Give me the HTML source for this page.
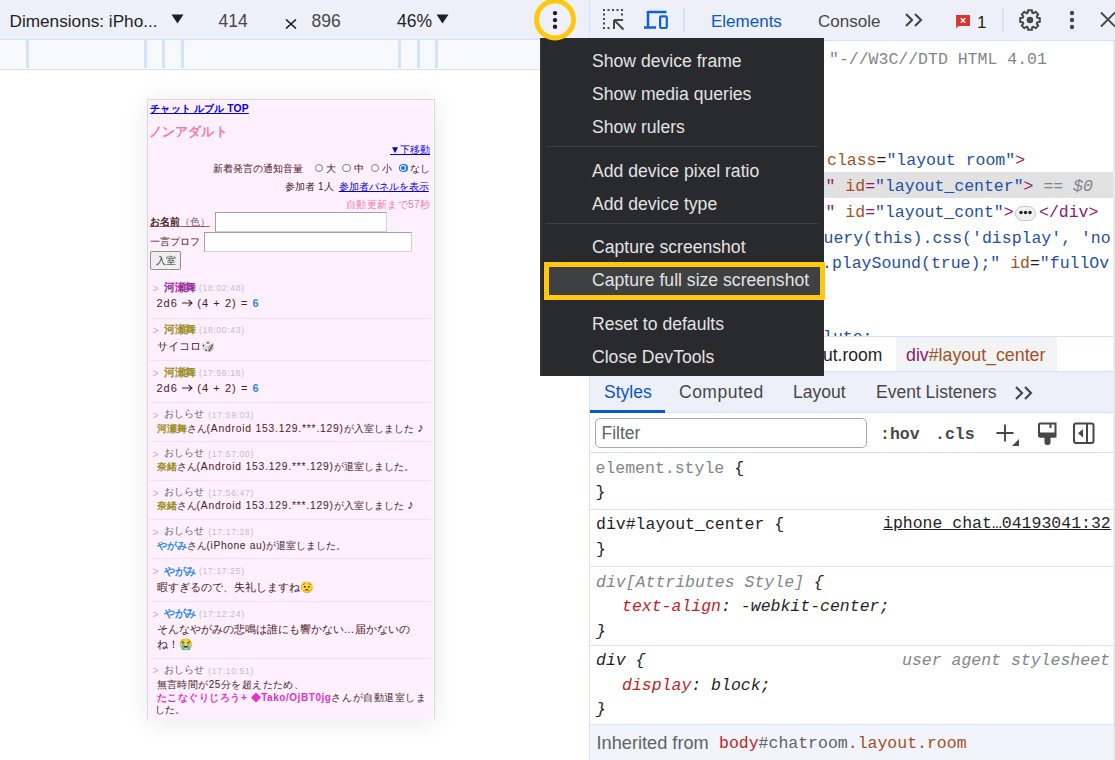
<!DOCTYPE html>
<html><head><meta charset="utf-8">
<style>
*{margin:0;padding:0;box-sizing:border-box}
html,body{width:1115px;height:760px;overflow:hidden;background:#fff;font-family:"Liberation Sans",sans-serif;position:relative}
.a{position:absolute}
.t{position:absolute;white-space:pre;line-height:1}
.mono{font-family:"Liberation Mono",monospace}
/* left */
#ltb{left:0;top:0;width:589px;height:39px;background:#edf0f8}
#lbd{left:0;top:39px;width:589px;height:1px;background:#d3e3fd}
#rul{left:0;top:40px;width:589px;height:29px;background:#f8f9fd}
#rbd{left:0;top:69px;width:589px;height:1px;background:#d3e3fd}
.rl{top:40px;width:3px;height:28px;background:#d3e3fd}
#vbd{left:589px;top:0;width:1px;height:760px;background:#d3e3fd}
/* devtools */
#dtb{left:590px;top:0;width:525px;height:40px;background:#edf0f8}
#dtbb{left:590px;top:40px;width:525px;height:1px;background:#d3e3fd}
.tb{font-size:17.5px;color:#474747}
.m{position:absolute;white-space:pre;line-height:1;font-family:"Liberation Mono",monospace;font-size:16.5px;color:#1f1f1f}
.tg{color:#8f1a6e}.an{color:#a5501f}.av{color:#1f4fa6}.dk{color:#1f1f1f}
.it{font-style:italic}
.p{position:absolute;white-space:pre;line-height:1}
.sans{font-family:"Liberation Sans",sans-serif}
.mi{position:absolute;left:592px;white-space:pre;line-height:1;font-size:17.6px;color:#e3e3e3}
.ms{position:absolute;left:546px;width:273px;height:1px;background:#3f4043}
.hl{position:absolute;height:1px;background:#d3e3fd}

</style></head><body>
<div class="a" id="ltb"></div>
<div class="a" id="lbd"></div>
<div class="a" id="rul"></div>
<div class="a" id="rbd"></div>
<div class="a rl" style="left:26px"></div>
<div class="a rl" style="left:144px"></div>
<div class="a rl" style="left:162px"></div>
<div class="a rl" style="left:181px"></div>
<div class="a rl" style="left:398px"></div>
<div class="a rl" style="left:417px"></div>
<div class="a rl" style="left:435px"></div>
<div class="a" id="vbd"></div>
<!-- phone start -->
<div class="a" style="left:147px;top:99px;width:288px;height:620px;background:#fff0ff;border:1px solid #d9d9d9;border-bottom:none;box-shadow:0 3px 24px rgba(0,0,0,.09)"></div>
<div class="a" style="left:433px;top:100px;width:1.2px;height:619px;background:#fff"></div>
<div class="p" style="left:150.3px;top:103.8px;font-size:10.3px;color:#0000ee;font-weight:bold;text-decoration:underline;letter-spacing:0.15px">チャット ルブル TOP</div>
<div class="p" style="left:148.6px;top:125.0px;font-size:13px;color:#f47aae;font-weight:bold;letter-spacing:0.2px">ノンアダルト</div>
<div class="p" style="right:685.0px;top:144.6px;font-size:10px;color:#0000ee;text-decoration:underline">▼下移動</div>
<div class="p" style="left:213.1px;top:163.8px;font-size:10px;color:#4b2020;">新着発言の通知音量</div>
<div class="a" style="left:314.5px;top:163.7px;width:8.6px;height:8.6px;border-radius:50%;background:#fff;border:1px solid #7a7a7a"></div>
<div class="p" style="left:325.7px;top:163.8px;font-size:10px;color:#4b2020;">大</div>
<div class="a" style="left:342.4px;top:163.7px;width:8.6px;height:8.6px;border-radius:50%;background:#fff;border:1px solid #7a7a7a"></div>
<div class="p" style="left:354.0px;top:163.8px;font-size:10px;color:#4b2020;">中</div>
<div class="a" style="left:370.8px;top:163.7px;width:8.6px;height:8.6px;border-radius:50%;background:#fff;border:1px solid #7a7a7a"></div>
<div class="p" style="left:381.7px;top:163.8px;font-size:10px;color:#4b2020;">小</div>
<div class="a" style="left:399.0px;top:163.7px;width:8.6px;height:8.6px;border-radius:50%;background:#1a73e8"></div>
<div class="a" style="left:400.2px;top:164.9px;width:6.2px;height:6.2px;border-radius:50%;background:#fff"></div>
<div class="a" style="left:401.1px;top:165.8px;width:4.4px;height:4.4px;border-radius:50%;background:#1a73e8"></div>
<div class="p" style="left:410.0px;top:163.8px;font-size:10px;color:#4b2020;">なし</div>
<div class="p" style="left:285.2px;top:181.5px;font-size:10px;color:#4b2020;">参加者 1人</div>
<div class="p" style="left:338.8px;top:181.5px;font-size:10px;color:#0000ee;text-decoration:underline">参加者パネルを表示</div>
<div class="p" style="right:684.7px;top:199.5px;font-size:10.3px;color:#f47aae;letter-spacing:0.3px">自動更新まで57秒</div>
<div class="p" style="left:149.8px;top:216.8px;font-size:10px;color:#4b2020;text-decoration:underline;text-decoration-color:#a05a5a"><b>お名前</b><span style="color:#7a5a6a">（色）</span></div>
<div class="a" style="left:215px;top:212px;width:172px;height:19.5px;background:#fff;border:1px solid #a0a0a0;border-right-color:#d0d0d0;border-bottom-color:#d0d0d0"></div>
<div class="p" style="left:149.8px;top:236.5px;font-size:10px;color:#4b2020;">一言プロフ</div>
<div class="a" style="left:204px;top:232px;width:208px;height:19.5px;background:#fff;border:1px solid #a0a0a0;border-right-color:#d0d0d0;border-bottom-color:#d0d0d0"></div>
<div class="a" style="left:150px;top:251.3px;width:31px;height:18.5px;background:#efefef;border:1px solid #8f8f8f;border-radius:2px"></div>
<div class="p" style="left:155.5px;top:255.8px;font-size:10px;color:#333;">入室</div>
<div class="p" style="left:152.6px;top:283.1px;font-size:10.5px;color:#c8b0c0;">&gt;</div>
<div class="p" style="left:164.0px;top:282.4px;font-size:11px;color:#9a2a9a;font-weight:bold;letter-spacing:-0.5px">河瀬舞</div>
<div class="p" style="left:199.0px;top:284.3px;font-size:8.6px;color:#cdb8c6;letter-spacing:0.65px">(18:02:48)</div>
<div class="p" style="left:156.5px;top:298.1px;font-size:11px;color:#4b2020;"><span style="letter-spacing:1.0px">2d6</span><svg width="11" height="8" style="margin:0 4.5px 0 4px;vertical-align:0px" viewBox="0 0 11 8"><path d="M0 4H10M6.5 0.8L10 4L6.5 7.2" stroke="#4b2020" stroke-width="1.1" fill="none"/></svg><span style="letter-spacing:1.05px">(4 + 2) = </span><span style="color:#2b8ae8;font-weight:bold">6</span></div>
<div class="a" style="left:150px;top:317.5px;width:281px;height:1px;background:#f2dff2"></div>
<div class="p" style="left:152.6px;top:325.1px;font-size:10.5px;color:#c8b0c0;">&gt;</div>
<div class="p" style="left:164.0px;top:324.4px;font-size:11px;color:#9e8c24;font-weight:bold;letter-spacing:-0.5px">河瀬舞</div>
<div class="p" style="left:199.0px;top:326.3px;font-size:8.6px;color:#cdb8c6;letter-spacing:0.65px">(18:00:43)</div>
<div class="p" style="left:156.5px;top:341.0px;font-size:11px;color:#4b2020;">サイコロ🎲</div>
<div class="a" style="left:150px;top:360.0px;width:281px;height:1px;background:#f2dff2"></div>
<div class="p" style="left:152.6px;top:367.8px;font-size:10.5px;color:#c8b0c0;">&gt;</div>
<div class="p" style="left:164.0px;top:367.1px;font-size:11px;color:#9e8c24;font-weight:bold;letter-spacing:-0.5px">河瀬舞</div>
<div class="p" style="left:199.0px;top:369.0px;font-size:8.6px;color:#cdb8c6;letter-spacing:0.65px">(17:59:18)</div>
<div class="p" style="left:156.5px;top:382.7px;font-size:11px;color:#4b2020;"><span style="letter-spacing:1.0px">2d6</span><svg width="11" height="8" style="margin:0 4.5px 0 4px;vertical-align:0px" viewBox="0 0 11 8"><path d="M0 4H10M6.5 0.8L10 4L6.5 7.2" stroke="#4b2020" stroke-width="1.1" fill="none"/></svg><span style="letter-spacing:1.05px">(4 + 2) = </span><span style="color:#2b8ae8;font-weight:bold">6</span></div>
<div class="a" style="left:150px;top:402.2px;width:281px;height:1px;background:#f2dff2"></div>
<div class="p" style="left:152.6px;top:409.5px;font-size:10.5px;color:#c8b0c0;">&gt;</div>
<div class="p" style="left:163.6px;top:409.2px;font-size:10px;color:#6a5a5a;">おしらせ</div>
<div class="p" style="left:208.3px;top:410.7px;font-size:8.6px;color:#cdb8c6;letter-spacing:0.65px">(17:59:03)</div>
<div class="p" style="left:156.5px;top:423.9px;font-size:10.3px;color:#4b2020;"><b style="color:#9e8c24">河瀬舞</b>さん<span style="letter-spacing:0.8px">(Android 153.129.***.129)</span>が入室しました<span style="font-size:13px;line-height:0;padding-left:3.5px">♪</span></div>
<div class="a" style="left:150px;top:441.3px;width:281px;height:1px;background:#f2dff2"></div>
<div class="p" style="left:152.6px;top:448.5px;font-size:10.5px;color:#c8b0c0;">&gt;</div>
<div class="p" style="left:163.6px;top:448.2px;font-size:10px;color:#6a5a5a;">おしらせ</div>
<div class="p" style="left:208.3px;top:449.7px;font-size:8.6px;color:#cdb8c6;letter-spacing:0.65px">(17:57:00)</div>
<div class="p" style="left:156.5px;top:462.3px;font-size:10.3px;color:#4b2020;"><b style="color:#9e8c24">奈緒</b>さん<span style="letter-spacing:0.8px">(Android 153.129.***.129)</span>が退室しました。</div>
<div class="a" style="left:150px;top:480.3px;width:281px;height:1px;background:#f2dff2"></div>
<div class="p" style="left:152.6px;top:487.5px;font-size:10.5px;color:#c8b0c0;">&gt;</div>
<div class="p" style="left:163.6px;top:487.2px;font-size:10px;color:#6a5a5a;">おしらせ</div>
<div class="p" style="left:208.3px;top:488.7px;font-size:8.6px;color:#cdb8c6;letter-spacing:0.65px">(17:56:47)</div>
<div class="p" style="left:156.5px;top:501.3px;font-size:10.3px;color:#4b2020;"><b style="color:#9e8c24">奈緒</b>さん<span style="letter-spacing:0.8px">(Android 153.129.***.129)</span>が入室しました<span style="font-size:13px;line-height:0;padding-left:3.5px">♪</span></div>
<div class="a" style="left:150px;top:519.3px;width:281px;height:1px;background:#f2dff2"></div>
<div class="p" style="left:152.6px;top:526.5px;font-size:10.5px;color:#c8b0c0;">&gt;</div>
<div class="p" style="left:163.6px;top:526.2px;font-size:10px;color:#6a5a5a;">おしらせ</div>
<div class="p" style="left:208.3px;top:527.7px;font-size:8.6px;color:#cdb8c6;letter-spacing:0.65px">(17:17:28)</div>
<div class="p" style="left:156.5px;top:540.9px;font-size:10.3px;color:#4b2020;"><b style="color:#2b8ae8">やがみ</b>さん<span style="letter-spacing:0.6px">(iPhone au)</span>が退室しました。</div>
<div class="a" style="left:150px;top:558.3px;width:281px;height:1px;background:#f2dff2"></div>
<div class="p" style="left:152.6px;top:566.2px;font-size:10.5px;color:#c8b0c0;">&gt;</div>
<div class="p" style="left:164.0px;top:565.5px;font-size:11px;color:#2b8ae8;font-weight:bold;letter-spacing:-0.5px">やがみ</div>
<div class="p" style="left:199.0px;top:567.4px;font-size:8.6px;color:#cdb8c6;letter-spacing:0.65px">(17:17:25)</div>
<div class="p" style="left:156.5px;top:581.7px;font-size:11px;color:#4b2020;">暇すぎるので、失礼しますね😟</div>
<div class="a" style="left:150px;top:601.3px;width:281px;height:1px;background:#f2dff2"></div>
<div class="p" style="left:152.6px;top:608.9px;font-size:10.5px;color:#c8b0c0;">&gt;</div>
<div class="p" style="left:164.0px;top:608.2px;font-size:11px;color:#2b8ae8;font-weight:bold;letter-spacing:-0.5px">やがみ</div>
<div class="p" style="left:199.0px;top:610.1px;font-size:8.6px;color:#cdb8c6;letter-spacing:0.65px">(17:12:24)</div>
<div class="p" style="left:156.5px;top:624.1px;font-size:11px;color:#4b2020;">そんなやがみの悲鳴は誰にも響かない…届かないの</div>
<div class="p" style="left:156.5px;top:639.2px;font-size:11px;color:#4b2020;">ね！😭</div>
<div class="a" style="left:150px;top:658.3px;width:281px;height:1px;background:#f2dff2"></div>
<div class="p" style="left:152.6px;top:665.3px;font-size:10.5px;color:#c8b0c0;">&gt;</div>
<div class="p" style="left:163.6px;top:665.0px;font-size:10px;color:#6a5a5a;">おしらせ</div>
<div class="p" style="left:208.3px;top:666.5px;font-size:8.6px;color:#cdb8c6;letter-spacing:0.65px">(17:10:51)</div>
<div class="p" style="left:156.5px;top:679.5px;font-size:10px;color:#4b2020;letter-spacing:0.45px">無言時間が25分を超えたため、</div>
<div class="p" style="left:156.5px;top:692.9px;font-size:10px;color:#4b2020;letter-spacing:0.55px"><b style="color:#e830c8">たこなぐりじろう+ ◆Tako/OjBT0jg</b>さんが自動退室しま</div>
<div class="p" style="left:154.5px;top:705.2px;font-size:10px;color:#4b2020;letter-spacing:0.3px">した。</div>
<!-- phone end -->


<div class="t tb" style="left:9.5px;top:13px;color:#1f1f1f;font-size:17.2px">Dimensions: iPho...</div>
<svg class="a" style="left:171px;top:14px" width="13" height="10"><path d="M0.5 0.5H12.5L6.5 9.5Z" fill="#1f1f1f"/></svg>
<div class="t tb" style="left:218.5px;top:13px">414</div>
<svg class="a" style="left:285px;top:19px" width="12" height="10"><path d="M1 0.5L11 9.5M11 0.5L1 9.5" stroke="#1f1f1f" stroke-width="1.6"/></svg>
<div class="t tb" style="left:311.5px;top:13px">896</div>
<div class="t tb" style="left:397px;top:13px;color:#1f1f1f">46%</div>
<svg class="a" style="left:436px;top:14px" width="13" height="10"><path d="M0.5 0.5H12.5L6.5 9.5Z" fill="#1f1f1f"/></svg>

<!-- devtools -->
<div class="a" id="dtb"></div>
<div class="a" id="dtbb"></div>

<!-- inspect icon -->
<svg class="a" style="left:602px;top:8px" width="24" height="24" viewBox="0 0 24 24">
<g fill="#474747">
<rect x="1" y="1" width="2" height="2"/><rect x="5.5" y="1" width="2" height="2"/><rect x="10" y="1" width="2" height="2"/><rect x="14.5" y="1" width="2" height="2"/><rect x="19" y="1" width="2" height="2"/>
<rect x="1" y="5.5" width="2" height="2"/><rect x="1" y="10" width="2" height="2"/><rect x="1" y="14.5" width="2" height="2"/><rect x="1" y="19" width="2" height="2"/>
<rect x="5.5" y="19" width="2" height="2"/><rect x="19" y="5.5" width="2" height="2"/>
</g>
<path d="M12 12H21M12 12V21M12 12L21.5 21.5" stroke="#474747" stroke-width="2" fill="none"/>
</svg>
<!-- device icon -->
<svg class="a" style="left:643px;top:10px" width="26" height="20" viewBox="0 0 26 20">
<path d="M5 2H23.5M5 1V17.5M1 17.5H13" stroke="#0b60e6" stroke-width="2.5" fill="none"/>
<rect x="17.1" y="6.3" width="6.7" height="11.7" rx="1.3" stroke="#0b60e6" stroke-width="2.2" fill="none"/>
</svg>
<div class="a" style="left:683px;top:8px;width:2px;height:24px;background:#d3e3fd"></div>
<div class="t" style="left:711px;top:13px;font-size:17px;color:#0b57d0">Elements</div>
<div class="t" style="left:818px;top:13px;font-size:17px;color:#474747">Console</div>
<svg class="a" style="left:904px;top:12px" width="20" height="16" viewBox="0 0 20 16"><path d="M2 2L8 8L2 14M11 2L17 8L11 14" stroke="#474747" stroke-width="2.2" fill="none"/></svg>
<!-- error badge -->
<svg class="a" style="left:955px;top:14px" width="16" height="16" viewBox="0 0 16 16">
<path d="M1 1H15V12H3.5L1.2 14.5Z" fill="#dc362e"/>
<path d="M5.8 4.3L10.2 8.7M10.2 4.3L5.8 8.7" stroke="#fff" stroke-width="1.5"/>
</svg>
<div class="t" style="left:977px;top:13.5px;font-size:17px;color:#1f1f1f">1</div>
<div class="a" style="left:1002px;top:8px;width:2px;height:24px;background:#d3e3fd"></div>
<!-- gear -->
<svg class="a" style="left:1018px;top:8px" width="24" height="24" viewBox="0 0 24 24">
<path d="M19.27 9.78 L21.82 10.09 L21.82 13.91 L19.27 14.22 L18.71 15.57 L20.29 17.59 L17.59 20.29 L15.57 18.71 L14.22 19.27 L13.91 21.82 L10.09 21.82 L9.78 19.27 L8.43 18.71 L6.41 20.29 L3.71 17.59 L5.29 15.57 L4.73 14.22 L2.18 13.91 L2.18 10.09 L4.73 9.78 L5.29 8.43 L3.71 6.41 L6.41 3.71 L8.43 5.29 L9.78 4.73 L10.09 2.18 L13.91 2.18 L14.22 4.73 L15.57 5.29 L17.59 3.71 L20.29 6.41 L18.71 8.43Z" fill="none" stroke="#474747" stroke-width="2" stroke-linejoin="round"/>
<circle cx="12" cy="12" r="3.3" fill="#474747"/>
</svg>
<!-- kebab -->
<svg class="a" style="left:1067px;top:8px" width="10" height="24"><circle cx="5" cy="5" r="2.2" fill="#474747"/><circle cx="5" cy="12" r="2.2" fill="#474747"/><circle cx="5" cy="19" r="2.2" fill="#474747"/></svg>
<svg class="a" style="left:1099px;top:11px" width="17" height="18"><path d="M2 1.5L16 15.5M16 1.5L2 15.5" stroke="#474747" stroke-width="1.9"/></svg>


<!-- elements panel -->
<div class="a" style="left:590px;top:41px;width:523px;height:295px;overflow:hidden;background:#fff">
 <div class="a" style="left:0;top:131px;width:523px;height:26px;background:#e1e1e1"></div>
 <div class="m" style="left:239px;top:10.5px;color:#80868b">"-//W3C//DTD HTML 4.01</div>
 <div class="m" style="left:237px;top:112px"><span class="an">class</span><span class="dk">=</span><span class="av">"layout room"</span><span class="tg">&gt;</span></div>
 <div class="m" style="left:235.5px;top:137.5px"><span class="tg">"</span> <span class="an">id</span><span class="tg">=</span><span class="av">"layout_center"</span><span class="tg">&gt;</span> <span class="it" style="color:#80868b">== $0</span></div>
 <div class="m" style="left:235.5px;top:163.5px"><span class="tg">"</span> <span class="an">id</span><span class="tg">=</span><span class="av">"layout_cont"</span><span class="tg">&gt;</span></div>
 <div class="a" style="left:425px;top:165px;width:21px;height:15px;border:1px solid #c4c7c5;border-radius:8px;background:#f1f1f1"></div>
 <svg class="a" style="left:428px;top:168.5px" width="15" height="5"><circle cx="3" cy="2.5" r="1.7" fill="#1f1f1f"/><circle cx="7.5" cy="2.5" r="1.7" fill="#1f1f1f"/><circle cx="12" cy="2.5" r="1.7" fill="#1f1f1f"/></svg>
 <div class="m tg" style="left:449px;top:163.5px">&lt;/div&gt;</div>
 <div class="m av" style="left:233.5px;top:190px">uery(this).css('display', 'no</div>
 <div class="m" style="left:232px;top:215px"><span class="av">.playSound(true);"</span> <span class="an">id</span><span class="dk">=</span><span class="av">"fullOv</span></div>
 <div class="m av" style="left:233px;top:289px">lute;</div>
</div>
<div class="hl" style="left:590px;top:336px;width:525px"></div>
<!-- breadcrumbs -->
<div class="a" style="left:896px;top:337px;width:161px;height:34px;background:#f1f3f4"></div>
<div class="t" style="left:823px;top:346.5px;font-size:17.5px;color:#1f1f1f">ut.room</div>
<div class="t" style="left:906px;top:346.5px;font-size:17.8px"><span class="tg">div</span><span class="an">#layout_center</span></div>
<div class="hl" style="left:590px;top:371px;width:525px"></div>
<!-- tabs -->
<div class="a" style="left:590px;top:372px;width:525px;height:40px;background:#edf0f8"></div>
<div class="hl" style="left:590px;top:412px;width:525px"></div>
<div class="a" style="left:590px;top:410px;width:75px;height:3px;background:#0b57d0"></div>
<div class="t" style="left:604px;top:384px;font-size:17.5px;color:#0b57d0">Styles</div>
<div class="t" style="left:679px;top:384px;font-size:17.5px;color:#474747;letter-spacing:0.5px">Computed</div>
<div class="t" style="left:793px;top:384px;font-size:17.5px;color:#474747">Layout</div>
<div class="t" style="left:876px;top:384px;font-size:17.5px;color:#474747">Event Listeners</div>
<svg class="a" style="left:1014px;top:385px" width="20" height="16" viewBox="0 0 20 16"><path d="M2 2L8 8L2 14M11 2L17 8L11 14" stroke="#474747" stroke-width="2.2" fill="none"/></svg>
<!-- filter row -->
<div class="a" style="left:595px;top:418px;width:272px;height:30px;border:1px solid #a8abae;border-radius:5px;background:#fff"></div>
<div class="t" style="left:601.5px;top:425px;font-size:17.5px;color:#5f6368">Filter</div>
<div class="m" style="left:880px;top:426.5px;font-weight:bold;color:#474747">:hov</div>
<div class="m" style="left:935px;top:426.5px;font-weight:bold;color:#474747">.cls</div>
<svg class="a" style="left:990px;top:415px" width="110" height="37" viewBox="0 0 110 37">
<path d="M15 9.5V26.5M6.5 18H23.5" stroke="#474747" stroke-width="1.9"/><path d="M29 24V31H22Z" fill="#474747"/>
<path d="M50 8.5H65.5V21.5H50Q49 21.5 49 20.5V9.5Q49 8.5 50 8.5Z" fill="none" stroke="#474747" stroke-width="2"/>
<path d="M60.5 8.5V13" stroke="#474747" stroke-width="2"/>
<path d="M49 17.5H65.5V21Q65.5 22.5 64 22.5H49.5Q49 22.5 49 21Z" fill="#474747"/>
<path d="M54.5 21.5H60.5V27.5Q60.5 30 57.5 30Q54.5 30 54.5 27.5Z" fill="#474747"/>
<rect x="84" y="8.5" width="19.5" height="19.5" rx="2" fill="none" stroke="#474747" stroke-width="2"/>
<path d="M97 8.5V28" stroke="#474747" stroke-width="2"/>
<path d="M93 14V22.5L88 18.25Z" fill="#474747"/>
</svg>
<div class="hl" style="left:590px;top:452px;width:523px"></div>
<!-- styles -->
<div class="m" style="left:595.5px;top:460.8px"><span style="color:#80868b">element.style</span> {</div>
<div class="m" style="left:595.5px;top:485.3px">}</div>
<div class="hl" style="left:590px;top:509px;width:523px"></div>
<div class="m" style="left:596px;top:517.3px">div#layout_center {</div>
<div class="m" style="left:596px;top:541.8px">}</div>
<div class="m" style="left:883px;top:516px;text-decoration:underline;color:#1f1f1f">iphone_chat…04193041:32</div>
<div class="hl" style="left:590px;top:566px;width:523px"></div>
<div class="m it" style="left:596px;top:574.6px"><span style="color:#80868b">div[Attributes Style]</span> {</div>
<div class="m it" style="left:622px;top:599px"><span style="color:#c5221f">text-align</span>: -webkit-center;</div>
<div class="m it" style="left:596px;top:623.5px">}</div>
<div class="hl" style="left:590px;top:645px;width:523px"></div>
<div class="m it" style="left:596px;top:653.3px">div {</div>
<div class="m it" style="left:622px;top:677.8px"><span style="color:#c5221f">display</span>: block;</div>
<div class="m it" style="left:596px;top:702.3px">}</div>
<div class="m it" style="left:902px;top:653.3px;color:#80868b">user agent stylesheet</div>
<div class="hl" style="left:590px;top:724px;width:523px"></div>
<div class="a" style="left:590px;top:725px;width:523px;height:35px;background:#f1f4fa"></div>
<div class="t" style="left:596.5px;top:733.5px;font-size:18.2px;color:#5f6368">Inherited from</div>
<div class="m" style="left:719px;top:735.5px"><span style="color:#c5221f">body</span><span style="color:#5f6368">#chatroom</span><span class="an">.layout.room</span></div>
<div class="a" style="left:1113px;top:41px;width:2px;height:719px;background:#ebebeb"></div>


<!-- menu -->
<div class="a" style="left:540px;top:38px;width:284px;height:338px;background:#292a2d;box-shadow:inset 1.5px 0 0 #35363a"></div>
<div class="mi" style="top:53.3px">Show device frame</div>
<div class="mi" style="top:86.3px">Show media queries</div>
<div class="mi" style="top:119.3px">Show rulers</div>
<div class="ms" style="top:146px"></div>
<div class="mi" style="top:162.8px">Add device pixel ratio</div>
<div class="mi" style="top:195.8px">Add device type</div>
<div class="ms" style="top:223px"></div>
<div class="mi" style="top:239.3px">Capture screenshot</div>
<div class="a" style="left:544px;top:262px;width:281px;height:38px;border:5px solid #ffc70f;background:#3f4042"></div>
<div class="mi" style="top:272.3px">Capture full size screenshot</div>
<div class="mi" style="top:315.5px">Reset to defaults</div>
<div class="mi" style="top:348.5px">Close DevTools</div>
<!-- yellow circle + kebab -->
<svg class="a" style="left:530px;top:-5px" width="50" height="50" viewBox="0 0 50 50">
<circle cx="25" cy="24.5" r="18.5" fill="none" stroke="#ffc70f" stroke-width="5"/>
<circle cx="25" cy="18.1" r="2.2" fill="#1f1f1f"/><circle cx="25" cy="25.1" r="2.2" fill="#1f1f1f"/><circle cx="25" cy="31.8" r="2.2" fill="#1f1f1f"/>
</svg>

</body></html>
